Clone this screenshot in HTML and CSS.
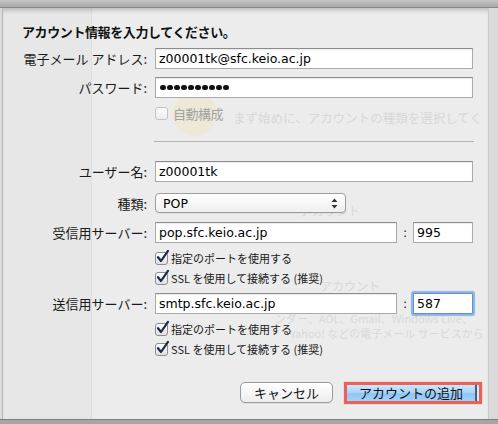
FILE: index.html
```html
<!DOCTYPE html>
<html lang="ja">
<head>
<meta charset="utf-8">
<title>アカウント情報</title>
<link rel="stylesheet" href="styles.css">
</head>
<body>
<div class="topbar"></div>
<div class="sheet">
  <div class="ghost g-side"></div>
  <div class="ghost g-circle"></div>
  <div class="ghost g-t1">まず始めに、アカウントの種類を選択してく</div>
  <div class="ghost g-t2">アカウント</div>
  <div class="ghost g-t4">アカウント</div>
  <div class="ghost g-t5">ンダー、AOL、Gmail、Windows Live、</div>
  <div class="ghost g-t6">Yahoo! などの電子メール サービスから</div>

  <h1 class="title">アカウント情報を入力してください。</h1>

  <div class="row r-email">
    <span class="lbl">電子メール アドレス:</span>
    <div class="field wide">z00001tk@sfc.keio.ac.jp</div>
  </div>
  <div class="row r-gap8">
    <span class="lbl">パスワード:</span>
    <div class="field wide dots"><i></i><i></i><i></i><i></i><i></i><i></i><i></i><i></i><i></i><i></i></div>
  </div>
  <div class="autorow">
    <span class="cb cb-off"></span>
    <span class="autolbl">自動構成</span>
  </div>

  <div class="sep"></div>

  <div class="row r-user">
    <span class="lbl">ユーザー名:</span>
    <div class="field wide">z00001tk</div>
  </div>
  <div class="row r-kind">
    <span class="lbl">種類:</span>
    <div class="popup">POP
      <svg class="arrows" viewBox="0 0 7 11" width="7" height="11"><path d="M3.5 0.5 L6.5 4 L0.5 4 Z M3.5 10.5 L6.5 7 L0.5 7 Z" fill="#333"/></svg>
    </div>
  </div>
  <div class="row r-gap9">
    <span class="lbl">受信用サーバー:</span>
    <div class="field srv">pop.sfc.keio.ac.jp</div>
    <span class="colon">:</span>
    <div class="field port">995</div>
  </div>
  <div class="cbrow first">
    <span class="cb"><svg viewBox="0 0 15 15"><path d="M3 7.2 L6 11 L13 0.8" fill="none" stroke="#1c2c4c" stroke-width="2.2" stroke-linecap="round" stroke-linejoin="round"/></svg></span>
    <span>指定のポートを使用する</span>
  </div>
  <div class="cbrow">
    <span class="cb"><svg viewBox="0 0 15 15"><path d="M3 7.2 L6 11 L13 0.8" fill="none" stroke="#1c2c4c" stroke-width="2.2" stroke-linecap="round" stroke-linejoin="round"/></svg></span>
    <span>SSL を使用して接続する (推奨)</span>
  </div>
  <div class="row r-gap8">
    <span class="lbl">送信用サーバー:</span>
    <div class="field srv">smtp.sfc.keio.ac.jp</div>
    <span class="colon">:</span>
    <div class="field port focus">587</div>
  </div>
  <div class="cbrow first">
    <span class="cb"><svg viewBox="0 0 15 15"><path d="M3 7.2 L6 11 L13 0.8" fill="none" stroke="#1c2c4c" stroke-width="2.2" stroke-linecap="round" stroke-linejoin="round"/></svg></span>
    <span>指定のポートを使用する</span>
  </div>
  <div class="cbrow">
    <span class="cb"><svg viewBox="0 0 15 15"><path d="M3 7.2 L6 11 L13 0.8" fill="none" stroke="#1c2c4c" stroke-width="2.2" stroke-linecap="round" stroke-linejoin="round"/></svg></span>
    <span>SSL を使用して接続する (推奨)</span>
  </div>

  <div class="btns">
    <div class="btn cancel">キャンセル</div>
    <div class="hl"><div class="btn primary">アカウントの追加</div></div>
  </div>
</div>
<div class="bottombar"></div>
</body>
</html>
```

FILE: styles.css
```css
* { box-sizing: border-box; margin: 0; padding: 0; }
html, body { width: 498px; height: 424px; overflow: hidden; }
body {
  background: #dadada;
  font-family: "Noto Sans CJK JP", "Noto Sans", sans-serif;
  color: #111;
}
.topbar {
  height: 8px;
  background: linear-gradient(#c6c6c6, #a8a8a8);
  border-bottom: 1px solid #888;
}
.sheet {
  position: relative;
  z-index: 0;
  margin-left: 2px;
  width: 487px;
  height: 411px;
  background: #ececec;
  border-left: 1px solid #b9b9b9;
  border-right: 1px solid #cbcbcb;
  box-shadow: inset 0 5px 5px -3px rgba(0,0,0,.22);
  overflow: hidden;
}
.bottombar {
  height: 5px;
  background: #a6a6a6;
  border-top: 1px solid #7d7d7d;
}

/* faint window behind the translucent sheet */
.ghost { position: absolute; z-index: -1; color: #d9d9d9; white-space: nowrap; font-size: 12px; line-height: 14px; }
.g-side { left: 0; top: 0; width: 89px; height: 100%; background: rgba(0,0,0,.018); border-right: 1px solid rgba(0,0,0,.03); }
.g-circle { left: 170px; top: 84px; width: 44px; height: 44px; border-radius: 50%; background: rgba(245,210,110,.16); }
.g-t1 { left: 230px; top: 103px; font-size: 12.5px; color: #d8d8d8; }
.g-t2 { left: 297px; top: 196px; }
.g-t4 { left: 317px; top: 271px; }
.g-t5 { left: 272px; top: 303px; font-size: 11px; }
.g-t6 { left: 287px; top: 318px; font-size: 11px; }

.title {
  margin: 15px 0 0 19px;
  font-size: 13px;
  font-weight: bold;
  line-height: 17px;
  letter-spacing: -0.4px;
  color: #111;
}

.row { display: flex; align-items: center; height: 21px; }
.r-email { margin-top: 8px; }
.r-gap8 { margin-top: 8px; }
.r-gap9 { margin-top: 9px; }
.r-user { margin-top: 19px; }
.r-kind { margin-top: 11px; height: 20px; }

.lbl {
  width: 144px;
  margin-right: 8px;
  text-align: right;
  font-size: 13px;
  line-height: 21px;
  color: #1a1a1a;
  white-space: nowrap;
}

.field {
  height: 21px;
  background: #fff;
  border: 1px solid #aaa;
  border-top-color: #8c8c8c;
  box-shadow: inset 0 1px 1px rgba(0,0,0,.08);
  font-family: "DejaVu Sans", sans-serif;
  font-size: 12.5px;
  line-height: 19px;
  padding-left: 3px;
  color: #000;
  white-space: nowrap;
  flex: none;
}
.wide { width: 318px; }
.srv { width: 242px; }
.port { width: 60px; }
.colon { width: 16px; text-align: center; font-family: "DejaVu Sans", sans-serif; font-size: 12.5px; color: #222; }
.focus {
  border: 1px solid #5f92d2;
  box-shadow: 0 0 1px 2px rgba(110,160,225,.75);
  border-radius: 1px;
}

.dots { display: flex; align-items: center; padding-left: 4px; }
.dots i { display: block; width: 5.5px; height: 5.5px; border-radius: 50%; background: #111; margin-right: 1.5px; }

.autorow {
  display: flex;
  align-items: center;
  height: 15px;
  margin-top: 8px;
  padding-left: 152px;
}
.autolbl { margin-left: 5px; font-size: 13px; line-height: 15px; color: #a2a2a2; letter-spacing: -0.5px; }

.cb {
  position: relative;
  flex: none;
  width: 13px;
  height: 13px;
  border: 1px solid #8e8e8e;
  border-radius: 3px;
  background: linear-gradient(#fff, #e0e0e0);
  margin-right: 3px;
}
.cb-off { border-color: #c4c4c4; background: linear-gradient(#fbfbfb, #eee); margin-right: 0; }
.cb svg { position: absolute; left: -1px; top: -3px; width: 15px; height: 15px; overflow: visible; }

.sep { margin: 20px 0 0 151px; width: 320px; height: 1px; background: #b3b3b3; }

.popup {
  position: relative;
  width: 191px;
  height: 20px;
  border: 1px solid #9d9d9d;
  border-radius: 4px;
  background: linear-gradient(#fff, #efefef);
  box-shadow: 0 1px 0 rgba(0,0,0,.05);
  display: flex;
  align-items: center;
  padding-left: 7px;
  font-family: "DejaVu Sans", sans-serif;
  font-size: 12.5px;
  color: #000;
}
.arrows { position: absolute; right: 7px; top: 4px; }

.cbrow {
  display: flex;
  align-items: center;
  height: 13px;
  margin-top: 7px;
  padding-left: 152px;
  font-size: 11px;
  line-height: 13px;
  color: #1a1a1a;
  white-space: nowrap;
}
.cbrow.first { margin-top: 9px; }

.btns { display: flex; align-items: flex-start; margin-top: 26px; padding-left: 237px; }
.btn { font-size: 13px; text-align: center; color: #111; white-space: nowrap; }
.cancel {
  width: 93px;
  height: 21px;
  line-height: 19px;
  border: 1px solid #9a9a9a;
  border-radius: 5px;
  background: linear-gradient(#fff, #eeeeee);
  box-shadow: 0 1px 0 rgba(0,0,0,.06);
}
.hl {
  margin-left: 11px;
  width: 138px;
  height: 22px;
  border: 3px solid #ec6157;
  box-shadow: 0 0 1px rgba(190,60,50,.6);
  background: #d7e9f8;
}
.primary {
  height: 16px;
  line-height: 16px;
  background: linear-gradient(#cde6fb 0%, #a9d3f8 48%, #8cc5f5 55%, #a3d3fa 100%);
  border-right: 2px solid #41607f;
  margin-right: 2px;
  color: #111;
}
```
